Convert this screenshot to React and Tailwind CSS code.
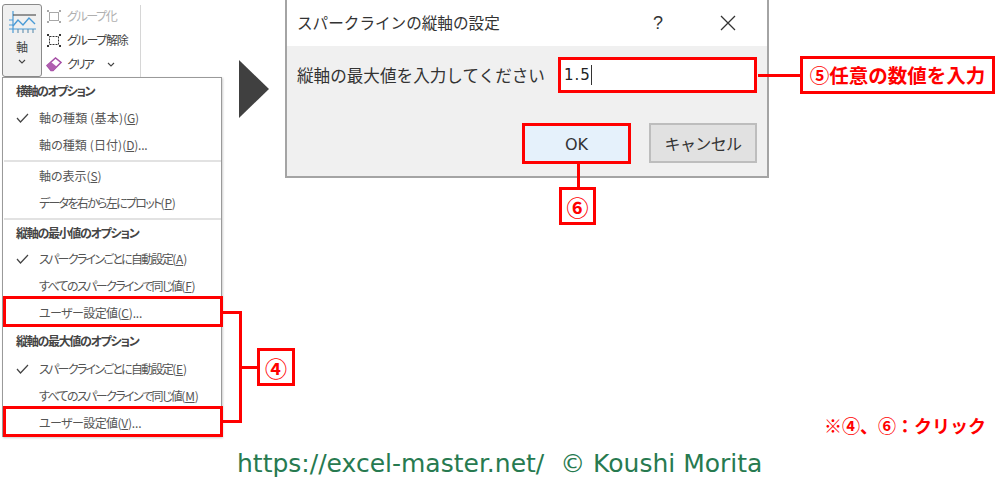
const JP = "font-['Noto_Sans_CJK_JP','Noto_Sans',sans-serif]";

const AXIS_GROUPS = [
  { type: "head", label: "横軸のオプション", cls: "h-[27px] tracking-[-1.5px]" },
  { type: "item", label: "軸の種類 (基本)", key: "G", checked: true, cls: "tracking-[0.2px]" },
  { type: "item", label: "軸の種類 (日付)", key: "D", dots: true, cls: "tracking-[0.1px]" },
  { type: "sep" },
  { type: "item", label: "軸の表示", key: "S", cls: "tracking-[0px]" },
  { type: "item", label: "データを右から左にプロット", key: "P", cls: "tracking-[-1.7px]" },
  { type: "sep" },
  { type: "head", label: "縦軸の最小値のオプション", cls: "h-[25px] tracking-[-1.3px]" },
  { type: "item", label: "スパークラインごとに自動設定", key: "A", checked: true, cls: "tracking-[-1.7px]" },
  { type: "item", label: "すべてのスパークラインで同じ値", key: "F", cls: "tracking-[-1.6px]" },
  { type: "item", label: "ユーザー設定値", key: "C", dots: true, boxed: true, cls: "tracking-[-0.6px]" },
  { type: "head", label: "縦軸の最大値のオプション", cls: "h-[28px] mt-[1px] tracking-[-1.3px]" },
  { type: "item", label: "スパークラインごとに自動設定", key: "E", checked: true, cls: "tracking-[-1.7px]" },
  { type: "item", label: "すべてのスパークラインで同じ値", key: "M", cls: "tracking-[-1.6px]" },
  { type: "item", label: "ユーザー設定値", key: "V", dots: true, boxed: true, cls: "tracking-[-0.6px]" },
];

function MenuRow({ row }) {
  if (row.type === "sep") {
    return <div className="my-[1px] ml-[1px] h-[2px] bg-[#e2e2e2]" />;
  }
  if (row.type === "head") {
    return (
      <div className={`flex items-center pl-[13px] text-[12px] font-bold whitespace-nowrap text-[#444444] [font-feature-settings:'palt'] ${row.cls}`}>
        {row.label}
      </div>
    );
  }
  return (
    <div className={`relative flex h-[27px] items-center text-[12px] whitespace-nowrap text-[#555555] [font-feature-settings:'palt'] ${row.cls}`}>
      <span className="flex w-[36px] shrink-0 justify-center pl-[3px]">
        {row.checked && (
          <svg width="13" height="10" viewBox="0 0 13 10" fill="none" stroke="#444444" strokeWidth="1.2">
            <path d="M1 5l3.500 4L12 1" />
          </svg>
        )}
      </span>
      <span>
        {row.label}
        <span className="tracking-[-0.2px]">
          (<span className="underline">{row.key}</span>){row.dots ? "..." : ""}
        </span>
      </span>
      {row.boxed && (
        <div className="absolute -top-[3px] -bottom-[1px] left-0 -right-[2px] border-[3px] border-[#ff0000]" />
      )}
    </div>
  );
}

function GroupIcon({ muted }) {
  const c = muted ? "#a8a8a8" : "#333333";
  return (
    <svg width="16" height="15" viewBox="0 0 16 15" fill="none" stroke={c} strokeWidth="1">
      <rect x="3.500" y="3.500" width="9" height="8" strokeDasharray={muted ? "none" : "2 1"} />
      <rect x="1" y="1" width="2" height="2" fill={c} stroke="none" />
      <rect x="13" y="1" width="2" height="2" fill={c} stroke="none" />
      <rect x="1" y="12" width="2" height="2" fill={c} stroke="none" />
      <rect x="13" y="12" width="2" height="2" fill={c} stroke="none" />
    </svg>
  );
}

function Ribbon() {
  return (
    <div className="flex h-[77px] items-start pl-[2px] pt-[4px]">
      <div className="flex h-[73px] w-[40px] flex-col items-center rounded-[3px] border border-[#8a8a8a] bg-[#f0f0f0] pt-[6px]">
        <svg width="28" height="23" viewBox="0 0 28 23" fill="none">
          <path d="M5 0v22M1 18h27M1 9h4M1 14h4" stroke="#4a9bd6" strokeWidth="1.2" />
          <path d="M10 18v4M15 18v4M20 18v4M25 18v4" stroke="#5f8fb0" strokeWidth="1.1" />
          <path d="M5 4h23" stroke="#555555" strokeWidth="1.2" />
          <path d="M5 15l5-6 5 5 6-7 6 6" stroke="#4a9bd6" strokeWidth="1.4" />
        </svg>
        <span className="mt-[6px] text-[12px] leading-[14px] text-[#444444]">軸</span>
        <svg className="mt-[5px]" width="8" height="5" viewBox="0 0 8 5" fill="none" stroke="#444444" strokeWidth="1.1">
          <path d="M1 1l3 3 3-3" />
        </svg>
      </div>
      <div className="ml-[4px] flex w-[93px] flex-col gap-[8px] pt-[4px] text-[12px] leading-[16px] whitespace-nowrap text-[#444444] [font-feature-settings:'palt']">
        <div className="flex items-center gap-[5px] text-[#b0b0b0]">
          <GroupIcon muted />
          <span className="tracking-[-1.4px]">グループ化</span>
        </div>
        <div className="flex items-center gap-[5px]">
          <GroupIcon />
          <span className="tracking-[-1.3px]">グループ解除</span>
        </div>
        <div className="flex items-center gap-[5px]">
          <svg width="16" height="15" viewBox="0 0 16 15" fill="none">
            <path d="M1 8.500L9.500 1 15 5.500 7 13.500H5z" fill="#ffffff" stroke="#a64ea6" strokeWidth="1.5" />
            <path d="M1 8.500L5 5l5.500 4.500-3.500 4H5z" fill="#b05fb0" />
          </svg>
          <span className="tracking-[-2px]">クリア</span>
          <svg className="ml-[9px]" width="8" height="5" viewBox="0 0 8 5" fill="none" stroke="#444444" strokeWidth="1.1">
            <path d="M1 1l3 3 3-3" />
          </svg>
        </div>
      </div>
      <div className="ml-[1px] mt-[1px] h-[72px] w-px bg-[#d6d6d6]" />
    </div>
  );
}

function Menu() {
  return (
    <div className="ml-[2px] flex h-[360px] w-[220px] flex-col border border-[#9a9a9a] bg-white shadow-[1px_1px_2px_rgba(0,0,0,0.2)]">
      {AXIS_GROUPS.map((row, i) => (
        <MenuRow key={i} row={row} />
      ))}
    </div>
  );
}

function Dialog() {
  return (
    <div className="flex h-[178px] w-[484px] flex-col border-2 border-t-0 border-[#a4a4a4] bg-[#f0f0f0] text-[#333333]">
      <div className="flex h-[46px] items-center bg-white pl-[10px]">
        <span className="w-[356px] text-[15.6px] whitespace-nowrap">スパークラインの縦軸の設定</span>
        <span className="font-['Liberation_Sans',sans-serif] text-[18px]">?</span>
        <svg className="ml-[57px]" width="16" height="16" viewBox="0 0 16 16" fill="none" stroke="#333333" strokeWidth="1.3">
          <path d="M1 1l14 14M15 1L1 15" />
        </svg>
      </div>
      <div className="flex items-center pl-[10px] pt-[11px]">
        <span className="w-[261px] text-[16.6px] whitespace-nowrap">縦軸の最大値を入力してください</span>
        <div className="flex h-[36px] w-[199px] items-center border-[3px] border-[#ff0000] bg-white pl-[3px]">
          <span className="font-['DejaVu_Sans',sans-serif] text-[15px] tracking-[1px] text-[#222222]">1.5</span>
          <span className="h-[20px] w-px bg-[#333333]" />
        </div>
      </div>
      <div className="flex items-start pl-[235px] pt-[30px]">
        <div className="flex h-[41px] w-[109px] items-center justify-center border-[3px] border-[#ff0000] bg-[#e5f1fb] pt-[2px] font-['DejaVu_Sans',sans-serif] text-[16px]">
          OK
        </div>
        <div className="ml-[18px] flex h-[40px] w-[108px] items-center justify-center border-2 border-[#bdbdbd] bg-[#e1e1e1] text-[16px] tracking-[-0.6px] whitespace-nowrap">
          キャンセル
        </div>
      </div>
    </div>
  );
}

export default function App() {
  return (
    <div className={`relative h-[479px] w-[1000px] overflow-hidden bg-white ${JP}`}>
      <div className="flex items-start">
        <div className="w-[236px]">
          <Ribbon />
          <Menu />
        </div>
        <svg className="mt-[60px] ml-[3px]" width="30" height="58" viewBox="0 0 30 58">
          <path d="M0 0l30 29L0 58z" fill="#404040" />
        </svg>
        <div className="ml-[16px]">
          <Dialog />
        </div>
      </div>

      {/* callouts and connector lines drawn over the screenshots */}
      <div className="absolute left-[221px] top-[311px] h-[112px] w-[21px] border-y-[3px] border-r-[3px] border-[#ff0000]" />
      <div className="absolute left-[242px] top-[366px] h-[3px] w-[16px] bg-[#ff0000]" />
      <div className="absolute left-[257px] top-[348px] flex h-[38px] w-[38px] items-center justify-center border-[3px] border-[#ff0000] bg-white text-[22px] font-bold text-[#ff0000]">
        ④
      </div>
      <div className="absolute left-[758px] top-[74px] h-[3px] w-[43px] bg-[#ff0000]" />
      <div className="absolute left-[800px] top-[56px] flex h-[38px] w-[195px] items-center justify-center border-[3px] border-[#ff0000] bg-white text-[19.5px] font-bold whitespace-nowrap text-[#ff0000]">
        ⑤任意の数値を入力
      </div>
      <div className="absolute left-[577px] top-[164px] h-[24px] w-[3px] bg-[#ff0000]" />
      <div className="absolute left-[559px] top-[187px] flex h-[38px] w-[37px] items-center justify-center border-[3px] border-[#ff0000] bg-white text-[22px] font-bold text-[#ff0000]">
        ⑥
      </div>
      <div className="absolute left-[824px] top-[412px] text-[18px] leading-[26px] font-bold whitespace-nowrap text-[#ff0000]">
        ※④、⑥：クリック
      </div>
      <div className="absolute left-[237px] top-[447px] font-['DejaVu_Sans',sans-serif] text-[25px] leading-[34px] whitespace-pre text-[#277a50]">
        https://excel-master.net/  © Koushi Morita
      </div>
    </div>
  );
}
